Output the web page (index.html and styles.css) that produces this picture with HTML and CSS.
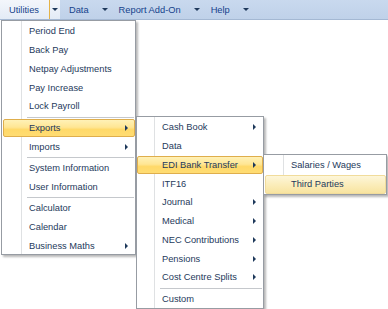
FILE: index.html
```html
<!DOCTYPE html>
<html>
<head>
<meta charset="utf-8">
<link rel="stylesheet" href="styles.css">
</head>
<body>
<div class="menubar">
  <div class="mb-item active"><span class="mb-label">Utilities</span><span class="mb-split"><i class="arrow-down"></i></span></div>
  <div class="mb-item"><span class="mb-label">Data</span><span class="mb-split"><i class="arrow-down"></i></span></div>
  <div class="mb-item"><span class="mb-label">Report Add-On</span><span class="mb-split"><i class="arrow-down"></i></span></div>
  <div class="mb-item"><span class="mb-label">Help</span><span class="mb-split"><i class="arrow-down"></i></span></div>
</div>

<div class="menu m1">
  <div class="item">Period End</div>
  <div class="item">Back Pay</div>
  <div class="item">Netpay Adjustments</div>
  <div class="item">Pay Increase</div>
  <div class="item">Lock Payroll</div>
  <div class="sep"></div>
  <div class="item selected">Exports<i class="arrow-right"></i></div>
  <div class="item">Imports<i class="arrow-right"></i></div>
  <div class="sep"></div>
  <div class="item">System Information</div>
  <div class="item">User Information</div>
  <div class="sep"></div>
  <div class="item">Calculator</div>
  <div class="item">Calendar</div>
  <div class="item">Business Maths<i class="arrow-right"></i></div>
</div>

<div class="menu m2">
  <div class="item">Cash Book<i class="arrow-right"></i></div>
  <div class="item">Data</div>
  <div class="item selected">EDI Bank Transfer<i class="arrow-right"></i></div>
  <div class="item">ITF16</div>
  <div class="item">Journal<i class="arrow-right"></i></div>
  <div class="item">Medical<i class="arrow-right"></i></div>
  <div class="item">NEC Contributions<i class="arrow-right"></i></div>
  <div class="item">Pensions<i class="arrow-right"></i></div>
  <div class="item">Cost Centre Splits<i class="arrow-right"></i></div>
  <div class="sep"></div>
  <div class="item">Custom</div>
</div>

<div class="menu m3">
  <div class="item">Salaries / Wages</div>
  <div class="item hover">Third Parties</div>
</div>
</body>
</html>
```

FILE: styles.css
```css
html, body {
  margin: 0;
  padding: 0;
  background: #ffffff;
}
body {
  width: 388px;
  height: 309px;
  overflow: hidden;
  position: relative;
  font-family: "Liberation Sans", Arial, sans-serif;
  font-size: 9.3px;
  color: #1e395b;
}

/* menu bar */
.menubar {
  display: flex;
  height: 19px;
  background: linear-gradient(#c9d9ee, #bfd1e9);
  border-bottom: 1px solid #a4b8d3;
  color: #15428b;
}
.mb-item {
  display: flex;
  align-items: stretch;
}
.mb-label {
  display: flex;
  align-items: center;
  padding: 0 10px 0 9px;
}
.mb-split {
  display: flex;
  align-items: center;
  justify-content: center;
  width: 10px;
  border-left: 1px solid transparent;
}
.mb-item.active {
  background: linear-gradient(#f3f6fb, #e3ebf6);
}
.mb-item.active .mb-split {
  border-left-color: #e5b347;
  background-clip: padding-box;
}
.arrow-down {
  display: block;
  width: 0;
  height: 0;
  border-style: solid;
  border-width: 3px 3px 0 3px;
  border-color: #1e395b transparent transparent transparent;
  margin-left: 1px;
}

/* popup menus */
.menu {
  position: absolute;
  box-sizing: border-box;
  border: 1px solid #979ca3;
  padding: 1px 0 0;
  background: linear-gradient(to right,
    #ffffff 0, #ffffff var(--g),
    #dfe1e3 var(--g), #dfe1e3 calc(var(--g) + 1px),
    #ffffff calc(var(--g) + 1px));
  box-shadow: 2px 2px 2px rgba(0, 0, 0, 0.28);
}
.m1 {
  --g: 19px;
  --t: 25px;
  left: 1px;
  top: 20px;
  width: 135px;
  height: 235px;
  z-index: 1;
}
.m2 {
  --g: 17px;
  --t: 23px;
  left: 136px;
  top: 116px;
  width: 128px;
  height: 193px;
  z-index: 2;
}
.m3 {
  --g: 19px;
  --t: 25px;
  left: 263px;
  top: 154px;
  width: 124px;
  height: 41px;
  z-index: 3;
}

.item {
  box-sizing: border-box;
  display: flex;
  align-items: center;
  height: 18.75px;
  margin: 0 0 0 1px;
  padding-left: var(--t);
  border: 1px solid transparent;
  border-radius: 2px;
  white-space: nowrap;
}
.m2 .item {
  margin: 0;
  padding-left: calc(var(--t) + 1px);
}
.item.selected {
  border-color: #dfae4c;
  background: linear-gradient(#fff1b7 0%, #ffe694 45%, #ffd969 60%, #ffdc73 100%);
}
.item.hover {
  border-color: #f1dc9b;
  background: linear-gradient(#fdf6d9 0%, #fbedbb 50%, #f8e4a0 100%);
}
.arrow-right {
  display: block;
  width: 0;
  height: 0;
  margin-left: auto;
  margin-right: 6px;
  border-style: solid;
  border-width: 3px 0 3px 3px;
  border-color: transparent transparent transparent #1e395b;
}

.sep {
  height: 1px;
  margin: 1px 1px 0.75px calc(var(--g) + 6px);
  background: #c5c8cc;
}
```
